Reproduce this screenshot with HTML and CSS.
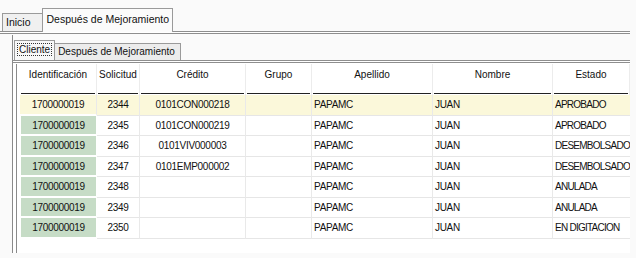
FILE: index.html
```html
<!DOCTYPE html>
<html>
<head>
<meta charset="utf-8">
<link rel="stylesheet" href="styles.css">
</head>
<body>
<div class="app">
  <div class="tabs outer-tabs">
    <div class="tab">Inicio</div>
    <div class="tab active">Después de Mejoramiento</div>
  </div>
  <div class="outer-panel">
    <div class="tabs inner-tabs">
      <div class="tab active"><span class="focus">Cliente</span></div>
      <div class="tab">Después de Mejoramiento</div>
    </div>
    <div class="inner-panel">
      <div class="grid">
        <div class="hd c">Identificación</div>
        <div class="hd c">Solicitud</div>
        <div class="hd c">Crédito</div>
        <div class="hd c">Grupo</div>
        <div class="hd c">Apellido</div>
        <div class="hd c">Nombre</div>
        <div class="hd c">Estado</div>

        <div class="cell id sel c">1700000019</div>
        <div class="cell sel c">2344</div>
        <div class="cell sel c">0101CON000218</div>
        <div class="cell sel"></div>
        <div class="cell sel l">PAPAMC</div>
        <div class="cell sel l">JUAN</div>
        <div class="cell sel l st">APROBADO</div>

        <div class="cell id green c">1700000019</div>
        <div class="cell c">2345</div>
        <div class="cell c">0101CON000219</div>
        <div class="cell"></div>
        <div class="cell l">PAPAMC</div>
        <div class="cell l">JUAN</div>
        <div class="cell l st">APROBADO</div>

        <div class="cell id green c">1700000019</div>
        <div class="cell c">2346</div>
        <div class="cell c">0101VIV000003</div>
        <div class="cell"></div>
        <div class="cell l">PAPAMC</div>
        <div class="cell l">JUAN</div>
        <div class="cell l st">DESEMBOLSADO</div>

        <div class="cell id green c">1700000019</div>
        <div class="cell c">2347</div>
        <div class="cell c">0101EMP000002</div>
        <div class="cell"></div>
        <div class="cell l">PAPAMC</div>
        <div class="cell l">JUAN</div>
        <div class="cell l st">DESEMBOLSADO</div>

        <div class="cell id green c">1700000019</div>
        <div class="cell c">2348</div>
        <div class="cell c"></div>
        <div class="cell"></div>
        <div class="cell l">PAPAMC</div>
        <div class="cell l">JUAN</div>
        <div class="cell l st">ANULADA</div>

        <div class="cell id green c">1700000019</div>
        <div class="cell c">2349</div>
        <div class="cell c"></div>
        <div class="cell"></div>
        <div class="cell l">PAPAMC</div>
        <div class="cell l">JUAN</div>
        <div class="cell l st">ANULADA</div>

        <div class="cell id green c">1700000019</div>
        <div class="cell c">2350</div>
        <div class="cell c"></div>
        <div class="cell"></div>
        <div class="cell l">PAPAMC</div>
        <div class="cell l">JUAN</div>
        <div class="cell l st">EN DIGITACION</div>
      </div>
    </div>
  </div>
</div>
</body>
</html>
```
FILE: styles.css
```css
html, body {
  margin: 0;
  padding: 0;
  background: #fafafa;
}
body {
  font-family: "Liberation Sans", Arial, sans-serif;
  font-size: 10px;
  color: #111;
  width: 636px;
  height: 258px;
  overflow: hidden;
}
.app {
  width: 630px;
  padding-top: 7px;
}
.tabs {
  display: flex;
  align-items: flex-end;
}
.outer-tabs {
  padding-left: 2px;
  height: 24px;
}
.outer-tabs .tab {
  height: 17px;
  line-height: 17px;
  padding: 0 11px 0 3px;
  border: 1px solid #9a9a9a;
  border-bottom: none;
  background: #f0f0f0;
  font-size: 10.5px;
}
.outer-tabs .tab.active {
  height: 23px;
  line-height: 21px;
  padding: 0 3px 0 4px;
  background: #fbfbfb;
  margin-left: -1px;
  margin-bottom: -1px;
  position: relative;
}
.outer-panel {
  border-top: 1px solid #8e8e8e;
  box-shadow: inset 0 1px 0 #fff, inset 0 2px 0 #8e8e8e;
  padding-top: 3px;
  height: 222px;
}
.inner-tabs {
  margin-left: 12px;
  border-left: 1px solid #888;
  padding-left: 1px;
  height: 25px;
}
.inner-tabs .tab {
  height: 16px;
  line-height: 16px;
  padding: 0 5px 0 3px;
  border: 1px solid #9a9a9a;
  border-bottom: none;
  background: #ececec;
}
.inner-tabs .tab.active {
  height: 19px;
  line-height: 18px;
  padding: 0 2px;
  background: #f8f8f8;
  margin-right: -1px;
  position: relative;
}
.focus {
  border: 1px dotted #333;
  padding: 0 1px;
}
.inner-panel {
  margin-left: 12px;
  border-left: 1px solid #8a8a8a;
  border-top: 1px solid #8e8e8e;
  box-shadow: inset 0 1px 0 #fff, inset 0 2px 0 #8e8e8e;
  padding-top: 3px;
  height: 189px;
  background: #fff;
  overflow: hidden;
}
.inner-panel .grid {
  margin-left: 3px;
  border-left: 1px solid #8a8a8a;
  padding-left: 3px;
  height: 189px;
}
.grid {
  display: grid;
  grid-template-columns: 77px 43px 106px 66px 121px 120px 77px;
  grid-template-rows: 31px repeat(7, 20.5px);
  align-content: start;
  overflow: hidden;
}
.hd {
  padding-top: 5px;
  border-right: 1px solid #ececec;
  position: relative;
  white-space: nowrap;
}
.hd:last-child {
  border-right: none;
  padding-left: 14px;
}
.hd::after {
  content: "";
  position: absolute;
  left: 1px;
  right: 1px;
  bottom: 1px;
  height: 1px;
  background: #222;
}
.hd:last-child::after {
  right: 0;
}
.cell {
  border-right: 1px solid #e9e9e9;
  border-bottom: 1px solid #e6e6e6;
  line-height: 19px;
  white-space: nowrap;
  letter-spacing: -0.3px;
}
.cell.st {
  border-right: none;
  letter-spacing: -0.75px;
}
.c { text-align: center; }
.l { padding-left: 2px; }
.sel { background: #fbf8da; }
.id.green {
  background: #c6dcc6;
  border-bottom: 2px solid #fff;
  border-right: 1px solid #fff;
  margin-left: 1px;
}
.id.sel {
  border-bottom: 2px solid #fff;
}
```
